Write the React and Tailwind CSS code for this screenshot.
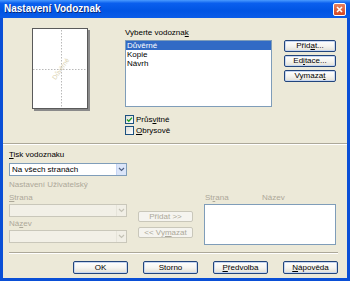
import React from "react";

const font = { fontFamily: '"Liberation Sans", Arial, sans-serif' };

function Btn({ children, className = "", disabled = false }) {
  if (disabled) {
    return (
      <div className={"flex items-center justify-center rounded-[2px] border border-[#c9c7ba] bg-[#f5f4ef] text-[#aca899] leading-none " + className}>
        {children}
      </div>
    );
  }
  return (
    <div className={"flex items-center justify-center rounded-[2px] border border-[#22457c] bg-gradient-to-b from-[#ffffff] via-[#f6f5f1] to-[#e2e0d6] shadow-[inset_0_0_0_1px_#c7d6f0] text-black leading-none " + className}>
      {children}
    </div>
  );
}

function Chevron({ color }) {
  return (
    <svg width="7" height="5" viewBox="0 0 7 5">
      <path d="M1 1 L3.5 3.5 L6 1" fill="none" stroke={color} strokeWidth="1.2" />
    </svg>
  );
}

function Combo({ text, disabled = false }) {
  return (
    <div className={"flex h-[13px] w-[118px] border " + (disabled ? "border-[#c9c7ba] bg-[#f2f0e7]" : "border-[#7f9db9] bg-white")}>
      <div className="flex flex-1 items-center pl-[2px] leading-none text-black">{text}</div>
      <div className={"flex w-[10px] items-center justify-center border-l " + (disabled ? "border-[#e6e4da] bg-[#f1efe6]" : "border-[#c6d5f5] bg-[#dbe5f9]")}>
        <Chevron color={disabled ? "#c4c2b6" : "#4d6185"} />
      </div>
    </div>
  );
}

function Check({ checked, label }) {
  return (
    <div className="flex h-[9px] items-center gap-[2px]">
      <div className="flex h-[9px] w-[9px] items-center justify-center border border-[#1c5180] bg-gradient-to-br from-[#dcdcd6] to-white">
        {checked && (
          <svg width="7" height="7" viewBox="0 0 7 7">
            <path d="M1 3.5 L2.8 5.3 L6 1.6" fill="none" stroke="#21a121" strokeWidth="1.4" />
          </svg>
        )}
      </div>
      <span className="leading-none">{label}</span>
    </div>
  );
}

export default function App() {
  return (
    <div className="h-[281px] w-[350px] overflow-hidden bg-[#0a4fd6] text-[8px]" style={font}>
      {/* Title bar */}
      <div className="flex h-[18px] items-center justify-between bg-[linear-gradient(to_bottom,#4a9bff_0%,#0a5fee_18%,#0054e3_60%,#0a5ce8_100%)] pl-[4px] pr-[4px]">
        <span className="text-[10px] font-bold leading-none text-white [text-shadow:1px_1px_0_#0a2a7a]">Nastavení Vodoznak</span>
        <div className="flex h-[13px] w-[13px] items-center justify-center rounded-[2px] border border-white bg-gradient-to-b from-[#e8805e] to-[#d44620]">
          <svg width="7" height="7" viewBox="0 0 7 7">
            <path d="M1 1 L6 6 M6 1 L1 6" stroke="white" strokeWidth="1.6" />
          </svg>
        </div>
      </div>

      {/* Body */}
      <div className="mx-[3px] h-[260px] bg-[#ece9d8]">
        {/* Top section */}
        <div className="flex h-[125px]">
          {/* Preview page */}
          <div className="ml-[29px] mt-[10px] h-[81px] w-[56px] border border-[#5a5a5a] bg-white shadow-[2px_2px_0_#8a8a8a]">
            <svg width="54" height="79" viewBox="0 0 54 79">
              <line x1="28.5" y1="1" x2="28.5" y2="79" stroke="#b9b9b9" strokeDasharray="1.5 1.5" />
              <line x1="0" y1="40.5" x2="54" y2="40.5" stroke="#b9b9b9" strokeDasharray="1.5 1.5" />
              <text x="28" y="42" fontSize="6.5" fill="#d9d0ae" textAnchor="middle" transform="rotate(-55 28 40)" fontFamily="Liberation Sans, Arial, sans-serif">Důvěrné</text>
            </svg>
          </div>

          {/* List column */}
          <div className="ml-[37px] mt-[10px] flex w-[147px] flex-col">
            <div className="h-[10px] leading-[10px]">Vyberte vodozna<span className="underline">k</span></div>
            <div className="mt-[2px] flex h-[67px] flex-col border border-[#7f9db9] bg-white">
              <div className="flex h-[9px] items-center bg-[#316ac5] pl-[1px] leading-none text-white">Důvěrné</div>
              <div className="flex h-[9px] items-center pl-[1px] leading-none">Kopie</div>
              <div className="flex h-[9px] items-center pl-[1px] leading-none">Návrh</div>
            </div>
            <div className="mt-[8px] flex flex-col gap-[2px]">
              <Check checked label={<span>Průs<span className="underline">v</span>itné</span>} />
              <Check label={<span><span className="underline">O</span>brysově</span>} />
            </div>
          </div>

          {/* Buttons column */}
          <div className="ml-[12px] mt-[22px] flex w-[52px] flex-col gap-[3px]">
            <Btn className="h-[12px]">Přid<span className="underline">a</span>t...</Btn>
            <Btn className="h-[12px]">Ed<span className="underline">i</span>tace...</Btn>
            <Btn className="h-[12px]">Vymaza<span className="underline">t</span></Btn>
          </div>
        </div>

        {/* Separator */}
        <div className="h-[1px] bg-[#aca899]" />
        <div className="h-[1px] bg-white" />

        {/* Lower section */}
        <div className="flex h-[107px]">
          <div className="ml-[6px] flex w-[118px] flex-col">
            <div className="mt-[5px] h-[10px] leading-[10px]"><span className="underline">T</span>isk vodoznaku</div>
            <div className="mt-[3px]">
              <Combo text="Na všech stranách" />
            </div>
            <div className="mt-[4px] h-[10px] leading-[10px] text-[#aca899]">Nastavení Uživatelský</div>
            <div className="mt-[3px] h-[10px] leading-[10px] text-[#aca899]"><span className="underline">S</span>trana</div>
            <div className="mt-[1px]">
              <Combo disabled text="" />
            </div>
            <div className="mt-[2px] h-[10px] leading-[10px] text-[#aca899]">Ná<span className="underline">z</span>ev</div>
            <div className="mt-[1px]">
              <Combo disabled text="" />
            </div>
          </div>

          <div className="ml-[11px] mt-[66px] flex w-[55px] flex-col gap-[5px]">
            <Btn disabled className="h-[11px]">Přidat &gt;&gt;</Btn>
            <Btn disabled className="h-[11px]">&lt;&lt; Vy<span className="underline">m</span>azat</Btn>
          </div>

          <div className="ml-[11px] mt-[48px] flex w-[132px] flex-col">
            <div className="flex h-[10px] leading-[10px] text-[#aca899]">
              <span className="ml-[1px] w-[57px]">St<span className="underline">r</span>ana</span>
              <span>Název</span>
            </div>
            <div className="mt-[1px] h-[41px] border border-[#7f9db9] bg-white" />
          </div>
        </div>

        {/* Bottom separator */}
        <div className="ml-[6px] h-[1px] w-[329px] bg-[#aca899]" />
        <div className="ml-[6px] h-[1px] w-[329px] bg-white" />

        {/* Bottom buttons */}
        <div className="mt-[7px] flex justify-end gap-[15px] pr-[9px]">
          <Btn className="h-[13px] w-[55px]">OK</Btn>
          <Btn className="h-[13px] w-[55px]">Storno</Btn>
          <Btn className="h-[13px] w-[55px]"><span className="underline">P</span>ředvolba</Btn>
          <Btn className="h-[13px] w-[55px]"><span className="underline">N</span>ápověda</Btn>
        </div>
      </div>
    </div>
  );
}
